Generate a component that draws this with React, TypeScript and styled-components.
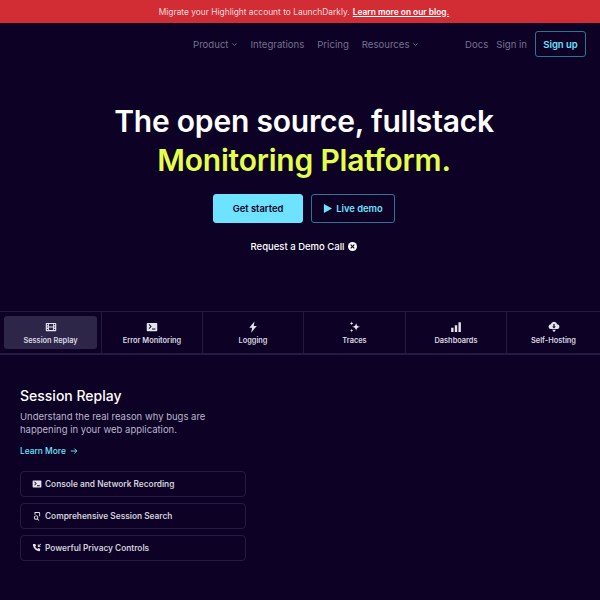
import React from 'react';
import styled, { createGlobalStyle } from 'styled-components';

const GlobalStyle = createGlobalStyle`
  html, body {
    margin: 0;
    padding: 0;
    background: #0d0225;
    font-family: "Inter", "Liberation Sans", sans-serif;
  }
  * { box-sizing: border-box; }
`;

const Page = styled.div`
  width: 600px;
  height: 600px;
  overflow: hidden;
  background: #0d0225;
  color: #fff;
`;

const Banner = styled.div`
  height: 23px;
  padding-left: 8px;
  background: #d22d35;
  color: #f4dcdc;
  font-size: 8.4px;
  display: flex;
  align-items: center;
  justify-content: center;
  gap: 3px;
`;

const BannerLink = styled.a`
  color: #fff;
  font-weight: 600;
  text-decoration: underline;
`;

const Nav = styled.nav`
  height: 42px;
  display: flex;
  align-items: center;
  padding: 0 14px 0 193px;
  font-size: 9.6px;
  color: #75708f;
`;

const NavLinks = styled.div`
  display: flex;
  align-items: center;
  gap: 13px;
`;

const NavItem = styled.span`
  display: flex;
  align-items: center;
  gap: 2px;
`;

const NavRight = styled.div`
  margin-left: auto;
  display: flex;
  align-items: center;
  gap: 8px;
`;

const SignUp = styled.button`
  width: 51px;
  height: 26px;
  border: 1px solid #2d7590;
  border-radius: 3px;
  background: transparent;
  color: #6de3ff;
  font: 600 9.5px "Inter", sans-serif;
  padding: 0;
`;

const Hero = styled.section`
  display: flex;
  flex-direction: column;
  align-items: center;
  padding: 37px 0 0 8px;
  height: 246px;
`;

const Title = styled.h1`
  margin: 0;
  font-size: 30px;
  line-height: 38.5px;
  letter-spacing: -0.2px;
  font-weight: 600;
  text-align: center;
`;

const Accent = styled.span`
  display: block;
  color: #e4fe4c;
`;

const Buttons = styled.div`
  display: flex;
  gap: 8px;
  margin-top: 15px;
`;

const HeroButton = styled.button<{ $primary?: boolean }>`
  height: 29px;
  width: ${p => (p.$primary ? '90px' : '84px')};
  border-radius: 3px;
  border: 1px solid ${p => (p.$primary ? '#6de3ff' : '#2d7590')};
  background: ${p => (p.$primary ? '#6de3ff' : 'transparent')};
  color: ${p => (p.$primary ? '#0d0225' : '#6de3ff')};
  font: 600 9.4px "Inter", sans-serif;
  display: flex;
  align-items: center;
  justify-content: center;
  gap: 4px;
  padding: 0;
`;

const DemoCall = styled.div`
  margin-top: 18px;
  font-size: 9.5px;
  font-weight: 500;
  display: flex;
  align-items: center;
  gap: 4px;
`;

const Tabs = styled.div`
  display: grid;
  grid-template-columns: 102px 101px 101px 102px 101px 93px;
  height: 44px;
  border-top: 1px solid #241a42;
  border-bottom: 2px solid #241a42;
`;

const Tab = styled.div`
  display: flex;
  align-items: center;
  justify-content: center;
  padding: 4px;
  border-right: 1px solid #241a42;
  &:last-child { border-right: none; }
`;

const TabInner = styled.div<{ $active?: boolean }>`
  width: 100%;
  height: 100%;
  border-radius: 3px;
  background: ${p => (p.$active ? '#2d2649' : 'transparent')};
  display: flex;
  flex-direction: column;
  align-items: center;
  justify-content: center;
  gap: 3px;
  font-size: 7.4px;
  font-weight: 600;
  color: #d9d7e2;
`;

const Content = styled.section`
  padding: 32px 20px 0;
`;

const Heading = styled.h2`
  margin: 0;
  font-size: 14px;
  line-height: 18px;
  font-weight: 500;
`;

const Description = styled.p`
  margin: 5px 0 0;
  width: 220px;
  font-size: 9.5px;
  line-height: 13px;
  color: #b9b5c9;
`;

const LearnMore = styled.a`
  margin-top: 10px;
  display: flex;
  align-items: center;
  gap: 4px;
  font-size: 8.4px;
  font-weight: 500;
  color: #6de3ff;
`;

const Features = styled.div`
  margin-top: 15px;
  width: 226px;
  display: flex;
  flex-direction: column;
  gap: 6px;
`;

const Feature = styled.div`
  height: 26px;
  border: 1px solid #241a42;
  border-radius: 4px;
  display: flex;
  align-items: center;
  gap: 3px;
  padding-left: 11px;
  font-size: 8.3px;
  font-weight: 600;
  color: #d1cfdb;
`;

const Chevron = () => (
  <svg width="7" height="7" viewBox="0 0 10 10" fill="none" stroke="currentColor" strokeWidth="1.4">
    <path d="M2 3.5l3 3 3-3" />
  </svg>
);

const terminal = (
  <path fillRule="evenodd" d="M2 2.500h12a1 1 0 0 1 1 1v9a1 1 0 0 1-1 1H2a1 1 0 0 1-1-1v-9a1 1 0 0 1 1-1zm1.500 2.500L5.800 7.300 3.500 9.600l.9.900 3.200-3.200L4.400 4.100zM8 10v1.400h4.500V10z" />
);

const tabs = [
  {
    label: 'Session Replay',
    icon: <path fillRule="evenodd" d="M2 2.500h12a1 1 0 0 1 1 1v9a1 1 0 0 1-1 1H2a1 1 0 0 1-1-1v-9a1 1 0 0 1 1-1zm.500 1.500v1.500h1.500V4zm0 3.200v1.600h1.500V7.200zm0 3.300v1.500h1.500v-1.500zM12 4v1.500h1.500V4zm0 3.200v1.600h1.500V7.200zm0 3.300v1.500h1.500v-1.500zM5.200 4v3.300h5.600V4zm0 4.700V12h5.600V8.700z" />,
  },
  { label: 'Error Monitoring', icon: terminal },
  { label: 'Logging', icon: <path d="M10 .5L3 9h3.800L5.500 15.500 13 6.500H9z" /> },
  {
    label: 'Traces',
    icon: <path d="M9.500 2.500c.5 3.200 1.800 4.500 5.500 5.300-3.700.8-5 2.100-5.500 5.300-.5-3.200-1.800-4.500-5.500-5.300 3.700-.8 5-2.100 5.500-5.300zM3.500 .8c.3 1.600.8 2.100 2.300 2.400-1.500.3-2 .8-2.300 2.400-.3-1.600-.8-2.100-2.300-2.400 1.500-.3 2-.8 2.300-2.400zM3.500 10.400c.3 1.600.8 2.100 2.300 2.400-1.500.3-2 .8-2.300 2.400-.3-1.600-.8-2.100-2.300-2.400 1.500-.3 2-.8 2.300-2.400z" />,
  },
  {
    label: 'Dashboards',
    icon: <path d="M1.500 9h3.200v5.500H1.500zM6.400 5.500h3.200v9H6.400zM11.300 1.500h3.200v13h-3.200z" />,
  },
  {
    label: 'Self-Hosting',
    icon: <path fillRule="evenodd" d="M8 1a4.300 4.300 0 0 1 4.200 3.400A3.200 3.200 0 0 1 12 10.800H4A3.200 3.200 0 0 1 3.800 4.400 4.300 4.300 0 0 1 8 1zM7.200 4v3.300H5.600L8 10l2.400-2.700H8.800V4zM5.500 11.500h5L8 15z" />,
  },
];

const features = [
  { label: 'Console and Network Recording', icon: terminal },
  {
    label: 'Comprehensive Session Search',
    icon: <path fillRule="evenodd" d="M4 1.500h7a2 2 0 0 1 2 2v5h-1.500v-5a.5.500 0 0 0-.5-.5H5.500v3H4zM6.500 7a3.500 3.500 0 0 1 2.900 5.500l2.300 2.300-.9.900-2.300-2.300A3.500 3.500 0 1 1 6.500 7zm0 1.500a2 2 0 1 0 0 4 2 2 0 0 0 0-4z" />,
  },
  {
    label: 'Powerful Privacy Controls',
    icon: <path d="M3 1.500h2.500l1 3-1.500 1.200c.8 1.700 2.100 3 3.800 3.800l1.200-1.500 3 1v2.500c0 1-.8 1.800-1.800 1.700C5.800 12.300 2.700 9.200 1.300 3.300 1.200 2.300 2 1.500 3 1.500zM13.500 1l1 1-3 3h2v1.300H9.300V2.100h1.300v1.900z" />,
  },
];

const App: React.FC = () => (
  <Page>
    <GlobalStyle />
    <Banner>
      <span>Migrate your Highlight account to LaunchDarkly.</span>
      <BannerLink>Learn more on our blog.</BannerLink>
    </Banner>
    <Nav>
      <NavLinks>
        <NavItem>Product <Chevron /></NavItem>
        <NavItem>Integrations</NavItem>
        <NavItem>Pricing</NavItem>
        <NavItem>Resources <Chevron /></NavItem>
      </NavLinks>
      <NavRight>
        <NavItem>Docs</NavItem>
        <NavItem>Sign in</NavItem>
        <SignUp>Sign up</SignUp>
      </NavRight>
    </Nav>
    <Hero>
      <Title>
        The open source, fullstack
        <Accent>Monitoring Platform.</Accent>
      </Title>
      <Buttons>
        <HeroButton $primary>Get started</HeroButton>
        <HeroButton>
          <svg width="9" height="9" viewBox="0 0 10 10" fill="currentColor"><path d="M1 0L10 5l-9 5z" /></svg>
          Live demo
        </HeroButton>
      </Buttons>
      <DemoCall>
        Request a Demo Call
        <svg width="9" height="9" viewBox="0 0 10 10">
          <circle cx="5" cy="5" r="5" fill="#fff" />
          <path d="M3 3l4 4M7 3l-4 4" stroke="#0d0225" strokeWidth="1.300" fill="none" />
        </svg>
      </DemoCall>
    </Hero>
    <Tabs>
      {tabs.map((t, i) => (
        <Tab key={t.label}>
          <TabInner $active={i === 0}>
            <svg width="12" height="12" viewBox="0 0 16 16" fill="#e4e2ea">{t.icon}</svg>
            {t.label}
          </TabInner>
        </Tab>
      ))}
    </Tabs>
    <Content>
      <Heading>Session Replay</Heading>
      <Description>Understand the real reason why bugs are happening in your web application.</Description>
      <LearnMore>
        Learn More
        <svg width="8" height="8" viewBox="0 0 10 10" fill="none" stroke="currentColor" strokeWidth="1.200"><path d="M1 5h7.500M5.500 2l3 3-3 3" /></svg>
      </LearnMore>
      <Features>
        {features.map(f => (
          <Feature key={f.label}>
            <svg width="10" height="10" viewBox="0 0 16 16" fill="#e4e2ea">{f.icon}</svg>
            {f.label}
          </Feature>
        ))}
      </Features>
    </Content>
  </Page>
);

export default App;
